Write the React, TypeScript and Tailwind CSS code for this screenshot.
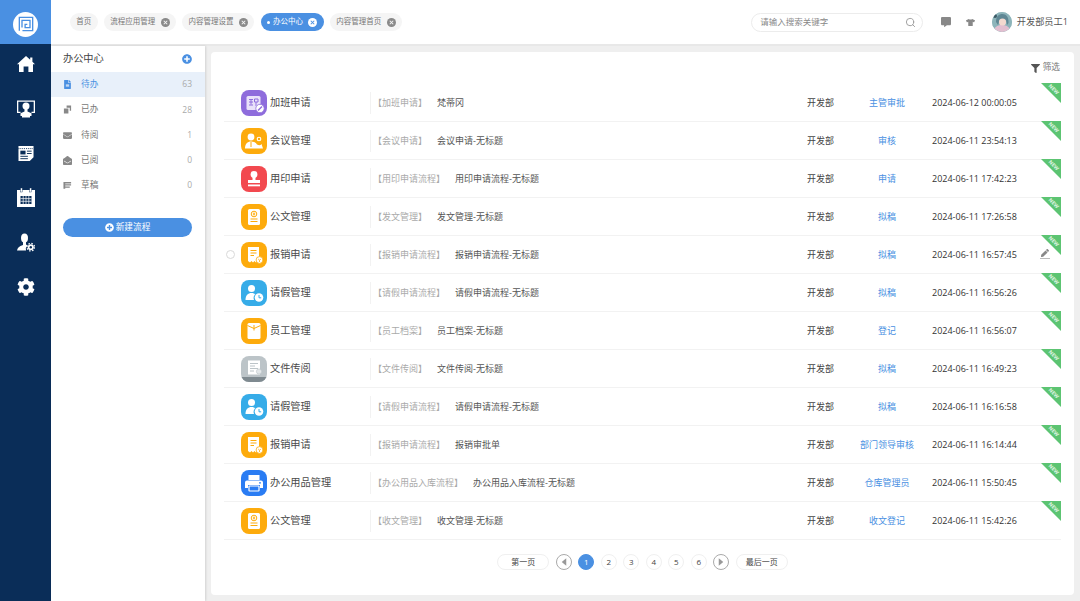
import type { ReactNode } from "react";
import {
  FaCog,
  FaCommentAlt,
  FaEnvelope,
  FaEnvelopeOpen,
  FaFileAlt,
  FaFilter,
  FaPen,
  FaPlusCircle,
  FaTshirt,
} from "react-icons/fa";
import { FiSearch } from "react-icons/fi";

const FONT = "font-['Open_Sans','Noto_Sans_CJK_SC',sans-serif]";

type IconKind = "overtime" | "meeting" | "seal" | "doc" | "expense" | "leave" | "staff" | "circulate" | "print";

type Row = {
  icon: IconKind;
  name: string;
  flow: string;
  title: string;
  step: string;
  time: string;
  hover?: boolean;
};

const ROWS: Row[] = [
  { icon: "overtime", name: "加班申请", flow: "加班申请", title: "梵蒂冈", step: "主管审批", time: "2024-06-12 00:00:05" },
  { icon: "meeting", name: "会议管理", flow: "会议申请", title: "会议申请-无标题", step: "审核", time: "2024-06-11 23:54:13" },
  { icon: "seal", name: "用印申请", flow: "用印申请流程", title: "用印申请流程-无标题", step: "申请", time: "2024-06-11 17:42:23" },
  { icon: "doc", name: "公文管理", flow: "发文管理", title: "发文管理-无标题", step: "拟稿", time: "2024-06-11 17:26:58" },
  { icon: "expense", name: "报销申请", flow: "报销申请流程", title: "报销申请流程-无标题", step: "拟稿", time: "2024-06-11 16:57:45", hover: true },
  { icon: "leave", name: "请假管理", flow: "请假申请流程", title: "请假申请流程-无标题", step: "拟稿", time: "2024-06-11 16:56:26" },
  { icon: "staff", name: "员工管理", flow: "员工档案", title: "员工档案-无标题", step: "登记", time: "2024-06-11 16:56:07" },
  { icon: "circulate", name: "文件传阅", flow: "文件传阅", title: "文件传阅-无标题", step: "拟稿", time: "2024-06-11 16:49:23" },
  { icon: "leave", name: "请假管理", flow: "请假申请流程", title: "请假申请流程-无标题", step: "拟稿", time: "2024-06-11 16:16:58" },
  { icon: "expense", name: "报销申请", flow: "报销申请流程", title: "报销审批单", step: "部门领导审核", time: "2024-06-11 16:14:44" },
  { icon: "print", name: "办公用品管理", flow: "办公用品入库流程", title: "办公用品入库流程-无标题", step: "仓库管理员", time: "2024-06-11 15:50:45" },
  { icon: "doc", name: "公文管理", flow: "收文管理", title: "收文管理-无标题", step: "收文登记", time: "2024-06-11 15:42:26" },
];

const TABS = [
  { label: "首页", closable: false },
  { label: "流程应用管理", closable: true },
  { label: "内容管理设置", closable: true },
  { label: "办公中心", closable: true, active: true },
  { label: "内容管理首页", closable: true },
];

const ICON_BG: Record<IconKind, string> = {
  overtime: "bg-[#8e6cdc]",
  meeting: "bg-[#fdab0c]",
  seal: "bg-[#f2494f]",
  doc: "bg-[#fdab0c]",
  expense: "bg-[#fdab0c]",
  leave: "bg-[#36ace8]",
  staff: "bg-[#fdab0c]",
  circulate: "bg-[#bcc4c8]",
  print: "bg-[#2a7cf3]",
};

function IconArt({ kind }: { kind: IconKind }) {
  switch (kind) {
    case "overtime":
      return (
        <>
          <rect x="5.5" y="6" width="14" height="14" rx="1.5" fill="#e9e2fa" />
          <path d="M8 9.5h4M10 9.5v5M8 12h4M8 15h4M13.5 9h3.5v3h-3.5zM15 12v4" stroke="#8e6cdc" strokeWidth="1" fill="none" />
          <circle cx="19" cy="18.5" r="4.2" fill="#fff" stroke="#8e6cdc" strokeWidth=".8" />
          <path d="M17 20.5l4-4" stroke="#8e6cdc" strokeWidth="1.4" />
        </>
      );
    case "meeting":
      return (
        <>
          <circle cx="10" cy="9" r="3.4" fill="#fff" />
          <path d="M4 20.500c0-4.500 2.500-7 6-7s5 1.500 6 3c2 1 3.500 1 4.500-.5l1.500 4.500z" fill="#fff" />
          <circle cx="18" cy="11" r="1.800" fill="none" stroke="#fff" strokeWidth="1.100" />
          <path d="M10 14v5" stroke="#fdab0c" strokeWidth="1" />
        </>
      );
    case "seal":
      return (
        <>
          <circle cx="13" cy="8.500" r="3.400" fill="#fff" />
          <path d="M11.500 11h3v3h4.500v3H7v-3h4.500z" fill="#fff" />
          <rect x="7" y="18.500" width="12" height="1.800" fill="#fff" />
        </>
      );
    case "doc":
      return (
        <>
          <rect x="7" y="5" width="12" height="16" rx="1.500" fill="#fff" />
          <circle cx="13" cy="10" r="2.800" fill="none" stroke="#fdab0c" strokeWidth="1" />
          <path d="M13 8.500v3M11.800 10h2.400M9.500 15h7M9.500 17.500h7" stroke="#fdab0c" strokeWidth="1" />
        </>
      );
    case "expense":
      return (
        <>
          <path d="M7 5h11v14h-2l-1 1.500-1.500-1.500-1.500 1.500-1.500-1.500-1.500 1.500L7 19z" fill="#fff" />
          <path d="M9.500 8.500h6M9.500 11h6M9.500 13.500h3.500" stroke="#fdab0c" strokeWidth="1" />
          <circle cx="18.500" cy="18" r="3.400" fill="#fff" stroke="#fdab0c" strokeWidth=".8" />
          <path d="M17.200 17l1.300 1.300 1.300-1.300M18.500 18.300V20" stroke="#fdab0c" strokeWidth=".8" fill="none" />
        </>
      );
    case "leave":
      return (
        <>
          <circle cx="10.500" cy="8.500" r="3.500" fill="#fff" />
          <path d="M4.500 20c0-4.500 2.500-7 6-7 2 0 3 .5 3.500 1.500-1.500 1.500-1.800 3.500-1 5.500z" fill="#fff" />
          <circle cx="18" cy="17.500" r="4.300" fill="#fff" />
          <path d="M18 15v2.800h2.200" stroke="#36ace8" strokeWidth="1" fill="none" />
        </>
      );
    case "staff":
      return (
        <>
          <rect x="6.500" y="5" width="13" height="16" rx="1.500" fill="#fff" />
          <path d="M6.500 7.500l6.500 3 6.500-3M13 7v5.500" stroke="#fdab0c" strokeWidth="1" fill="none" />
        </>
      );
    case "circulate":
      return (
        <>
          <rect x="0" y="21" width="26" height="5" fill="#7f8a90" />
          <rect x="7" y="4.500" width="12" height="14" fill="#fff" />
          <path d="M9 7.500h8M9 10h5M9 12.500h8M9 15h4" stroke="#bcc4c8" strokeWidth="1" />
          <circle cx="18" cy="15.500" r="2.600" fill="#e4e8ea" stroke="#bcc4c8" strokeWidth=".6" />
        </>
      );
    case "print":
      return (
        <>
          <rect x="7.500" y="5" width="11" height="5" fill="#fff" />
          <path d="M6 10.500h14a2 2 0 0 1 2 2V18h-3v-3H7v3H4v-5.500a2 2 0 0 1 2-2z" fill="#fff" />
          <rect x="8" y="16" width="10" height="5" rx=".5" fill="none" stroke="#fff" strokeWidth="1.200" />
          <circle cx="19" cy="12.800" r=".9" fill="#2a7cf3" />
        </>
      );
  }
}

function AppIcon({ kind }: { kind: IconKind }) {
  return (
    <div className={`h-[26px] w-[26px] shrink-0 overflow-hidden rounded-[8px] ${ICON_BG[kind]}`}>
      <svg viewBox="0 0 26 26" width="26" height="26" aria-hidden="true">
        <IconArt kind={kind} />
      </svg>
    </div>
  );
}

function Logo() {
  return (
    <div className="flex h-[25px] w-[25px] items-center justify-center rounded-full bg-white">
      <svg viewBox="0 0 18 18" width="16" height="16" fill="none" stroke="#4a90e2" strokeWidth="1.500" aria-hidden="true">
        <path d="M1.500 16.500V1.500h15v15H5" />
        <path d="M4.500 13V5h9v8H8V9.500h2.500" />
      </svg>
    </div>
  );
}

function NavHome() {
  return (
    <svg viewBox="0 0 18 18" width="18" height="18" fill="#fff" aria-hidden="true">
      <path d="M9 1l4.200 3.800V2.500h2.200v4.300L18 9.200h-2V17h-4.600v-5.500H6.600V17H2V9.200H0z" />
    </svg>
  );
}

function NavMonitor() {
  return (
    <svg viewBox="0 0 18 18" width="18" height="18" fill="#fff" aria-hidden="true">
      <path d="M0 .5h18v12.500h-3.500v-1.300h2.200V1.800H1.300v9.900h2.200V13H0z" />
      <circle cx="9" cy="6" r="3.500" />
      <path d="M7.500 9h3v2.500l4 1.700V16h-11v-2.800l4-1.700z" />
      <rect x="5" y="16" width="8" height="1.500" />
    </svg>
  );
}

function NavNews() {
  return (
    <svg viewBox="0 0 17 18" width="16" height="17" aria-hidden="true">
      <path d="M.5 1h16v12l-4 4H.5z" fill="#fff" />
      <path d="M.5 3.800h16" stroke="#0a2d58" strokeWidth="1" strokeDasharray="1 1" />
      <rect x="2.500" y="6" width="5.500" height="4" fill="#0a2d58" />
      <path d="M9.500 6.500h5M9.500 9h5M2.500 12h8M2.500 14.500h8" stroke="#0a2d58" strokeWidth="1" />
    </svg>
  );
}

function NavCalendar() {
  return (
    <svg viewBox="0 0 18 19" width="18" height="19" aria-hidden="true">
      <rect x="0" y="2" width="18" height="17" fill="#fff" />
      <rect x="3.500" y="0" width="1.800" height="4" fill="#fff" stroke="#0a2d58" strokeWidth=".4" />
      <rect x="12.700" y="0" width="1.800" height="4" fill="#fff" stroke="#0a2d58" strokeWidth=".4" />
      <path d="M3.500 8h11v8h-11z" fill="#0a2d58" />
      <path d="M6.200 8v8M9 8v8M11.800 8v8M3.500 10.600h11M3.500 13.300h11" stroke="#fff" strokeWidth=".7" />
    </svg>
  );
}

function NavUser() {
  return (
    <svg viewBox="0 0 18 19" width="18" height="19" aria-hidden="true">
      <ellipse cx="7.500" cy="5" rx="3.500" ry="4.500" fill="#fff" />
      <path d="M6 9h3v2.500l1.500 1a5 5 0 0 0-1.500 5H0c.5-2.500 2-4.500 6-5.500z" fill="#fff" />
      <circle cx="13.800" cy="14.200" r="3" fill="#fff" />
      <circle cx="13.800" cy="14.200" r="3.800" fill="none" stroke="#fff" strokeWidth="1.200" strokeDasharray="1.500 1.500" />
      <circle cx="13.800" cy="14.200" r="1.200" fill="#0a2d58" />
    </svg>
  );
}

const NAV: ReactNode[] = [
  <NavHome key="home" />,
  <NavMonitor key="monitor" />,
  <NavNews key="news" />,
  <NavCalendar key="calendar" />,
  <NavUser key="user" />,
  <FaCog key="cog" size={18} />,
];

function Stack() {
  return (
    <svg viewBox="0 0 10 10" width="9" height="9" fill="#888" aria-hidden="true">
      <path d="M4 .5h5v6H7.500V3H4zM1 4h5v5.500H1z" />
    </svg>
  );
}

function Draft() {
  return (
    <svg viewBox="0 0 10 10" width="9" height="9" fill="#888" aria-hidden="true">
      <path d="M.5 1h8.500v1.800H2.500v.8h6.500v1.500H2.500V6h5v1.500h-5v1h-2z" />
    </svg>
  );
}

const MENU = [
  { label: "待办", count: 63, icon: <FaFileAlt size={9} className="text-[#4a90e2]" />, active: true },
  { label: "已办", count: 28, icon: <Stack /> },
  { label: "待阅", count: 1, icon: <FaEnvelope size={9} className="text-[#888]" /> },
  { label: "已阅", count: 0, icon: <FaEnvelopeOpen size={9} className="text-[#888]" /> },
  { label: "草稿", count: 0, icon: <Draft /> },
];

function CloseDot({ active }: { active?: boolean }) {
  return (
    <span
      className={`flex h-[9px] w-[9px] items-center justify-center rounded-full ${
        active ? "bg-white text-[#4a90e2]" : "bg-[#8a8a8a] text-[#f5f5f5]"
      }`}
    >
      <svg viewBox="0 0 8 8" width="7" height="7" stroke="currentColor" strokeWidth="1.200" aria-hidden="true">
        <path d="M2 2l4 4M6 2L2 6" />
      </svg>
    </span>
  );
}

function Avatar() {
  return (
    <div className="h-[20px] w-[20px] overflow-hidden rounded-full bg-[#9fc0c4]">
      <svg viewBox="0 0 20 20" width="20" height="20" aria-hidden="true">
        <rect width="20" height="20" fill="#8db4ba" />
        <path d="M2 20c0-5 3-7 8-7s8 2 8 7z" fill="#e2bfd0" />
        <path d="M4 10C4 4 7 2 10.500 2S17 5 16.500 11l-1.500 2-1-5-6-1-2 6z" fill="#5f8794" />
        <circle cx="10.500" cy="10" r="3.600" fill="#f3d9cf" />
        <circle cx="3" cy="4" r="2" fill="#3c5a66" />
      </svg>
    </div>
  );
}

function NewRibbon() {
  return (
    <div className="absolute -top-px right-0 h-[20px] w-[20px]">
      <div className="absolute inset-0 bg-[#5cc472] [clip-path:polygon(0_0,100%_0,100%_100%)]" />
      <span className="absolute top-[3px] left-[7px] rotate-45 text-[5px] leading-[6px] font-bold text-white/85">NEW</span>
    </div>
  );
}

function ListRow({ row }: { row: Row }) {
  return (
    <div className="relative flex h-[38px] items-center border-b border-[#f2f2f2]">
      <div className="flex w-[17px] shrink-0 items-center pl-[2px]">
        {row.hover && <span className="h-[9px] w-[9px] rounded-full border border-[#d9d9d9]" />}
      </div>
      <div className="flex h-[22px] w-[130px] shrink-0 items-center border-r border-[#f2f2f2]">
        <AppIcon kind={row.icon} />
        <span className="ml-[3px] text-[10.2px] text-[#4a4a4a]">{row.name}</span>
      </div>
      <div className="flex min-w-0 flex-1 items-center pl-[2px] text-[9px]">
        <span className="text-[#aaa]">【{row.flow}】</span>
        <span className="ml-[10px] text-[#555]">{row.title}</span>
      </div>
      <div className="w-[40px] shrink-0 text-[9px] text-[#444]">开发部</div>
      <div className="w-[80px] shrink-0 text-center text-[9px] text-[#4a90e2]">{row.step}</div>
      <div className="w-[134px] shrink-0 pl-[5px] text-[9px] text-[#333]">{row.time}</div>
      <NewRibbon />
      {row.hover && <FaPen size={8} className="absolute top-[13px] right-[12px] text-[#888]" />}
      {row.hover && <span className="absolute top-[22px] right-[11px] h-px w-[10px] bg-[#bbb]" />}
    </div>
  );
}

function PageCircle({ dir }: { dir: "prev" | "next" }) {
  return (
    <span className="flex h-[16px] w-[16px] items-center justify-center rounded-full border border-[#aaa]">
      <svg viewBox="0 0 8 10" width="6" height="8" fill="#999" aria-hidden="true">
        {dir === "prev" ? <path d="M7 0v10L1 5z" /> : <path d="M1 0v10l6-5z" />}
      </svg>
    </span>
  );
}

function Pagination() {
  const pill = "flex h-[16px] w-[52px] items-center justify-center rounded-full border border-[#f0f0f0] text-[8px] text-[#444]";
  return (
    <div className="mt-[14px] flex items-center justify-center gap-[6.500px]">
      <span className={pill}>第一页</span>
      <PageCircle dir="prev" />
      {[1, 2, 3, 4, 5, 6].map((n) => (
        <span
          key={n}
          className={`flex h-[16px] w-[16px] items-center justify-center rounded-full border text-[8px] ${
            n === 1 ? "border-[#4a90e2] bg-[#4a90e2] text-white" : "border-[#f0f0f0] text-[#444]"
          }`}
        >
          {n}
        </span>
      ))}
      <PageCircle dir="next" />
      <span className={pill}>最后一页</span>
    </div>
  );
}

export default function App() {
  return (
    <div className={`flex h-[601px] w-[1080px] overflow-hidden bg-[#efefef] ${FONT}`}>
      <aside className="flex w-[51px] shrink-0 flex-col bg-[#0a2d58]">
        <div className="flex h-[44px] shrink-0 items-center justify-center bg-[#4a90e2] pt-[4px]">
          <Logo />
        </div>
        <nav className="mt-[10px] flex flex-col gap-[24.600px]">
          {NAV.map((icon, i) => (
            <div key={i} className="flex h-[20px] items-center justify-center text-white">
              {icon}
            </div>
          ))}
        </nav>
      </aside>

      <div className="flex min-w-0 flex-1 flex-col">
        <header className="flex h-[46px] shrink-0 items-center border-b-2 border-[#e8e8e8] bg-white pr-[12px] pl-[19px]">
          <div className="flex gap-[6.500px]">
            {TABS.map((tab) => (
              <div
                key={tab.label}
                className={`flex h-[18px] items-center gap-[5.250px] rounded-full px-[6.250px] text-[7.500px] ${
                  tab.active ? "bg-[#4a90e2] text-white" : "bg-[#f5f5f5] text-[#777]"
                }`}
              >
                {tab.active && <span className="-mr-[2px] h-[3px] w-[3px] rounded-full bg-white" />}
                <span>{tab.label}</span>
                {tab.closable && <CloseDot active={tab.active} />}
              </div>
            ))}
          </div>
          <div className="ml-auto flex h-[19px] w-[172px] items-center justify-between rounded-full border border-[#ececec] pr-[6px] pl-[8px]">
            <span className="text-[8.500px] text-[#888]">请输入搜索关键字</span>
            <FiSearch size={11} className="text-[#999]" />
          </div>
          <FaCommentAlt size={10} className="ml-[17.500px] text-[#888]" />
          <FaTshirt size={9} className="ml-[15.500px] text-[#888]" />
          <div className="ml-[16.500px]">
            <Avatar />
          </div>
          <span className="ml-[5px] text-[9.200px] text-[#555]">开发部员工1</span>
        </header>

        <div className="flex min-h-0 flex-1">
          <section className="flex w-[154px] shrink-0 flex-col bg-white shadow-[1px_0_2px_rgba(0,0,0,0.12)]">
            <div className="flex h-[26px] shrink-0 items-center justify-between pr-[13px] pl-[12px]">
              <span className="text-[10.200px] text-[#444]">办公中心</span>
              <FaPlusCircle size={10} className="text-[#4a90e2]" />
            </div>
            {MENU.map((m) => (
              <div
                key={m.label}
                className={`flex h-[25.300px] items-center pr-[13px] pl-[12px] ${m.active ? "bg-[#e8f0fa]" : ""}`}
              >
                <span className="flex w-[18px]">{m.icon}</span>
                <span className={`text-[8.700px] ${m.active ? "text-[#4a90e2]" : "text-[#777]"}`}>{m.label}</span>
                <span className="ml-auto text-[8.500px] text-[#aaa]">{m.count}</span>
              </div>
            ))}
            <button className="mt-[19.500px] mr-[13px] ml-[12px] flex h-[19px] items-center justify-center gap-[2px] rounded-full bg-[#4a90e2] text-[8.700px] text-white">
              <FaPlusCircle size={9} />
              新建流程
            </button>
          </section>

          <main className="mx-[6px] my-[6px] flex min-w-0 flex-1 flex-col rounded-[4px] bg-white px-[13px]">
            <div className="flex h-[32px] shrink-0 items-center justify-end gap-[3px] pr-[1px] text-[8.700px] text-[#777]">
              <FaFilter size={9} className="text-[#555]" />
              筛选
            </div>
            {ROWS.map((row) => (
              <ListRow key={row.time} row={row} />
            ))}
            <Pagination />
          </main>
        </div>
      </div>
    </div>
  );
}
